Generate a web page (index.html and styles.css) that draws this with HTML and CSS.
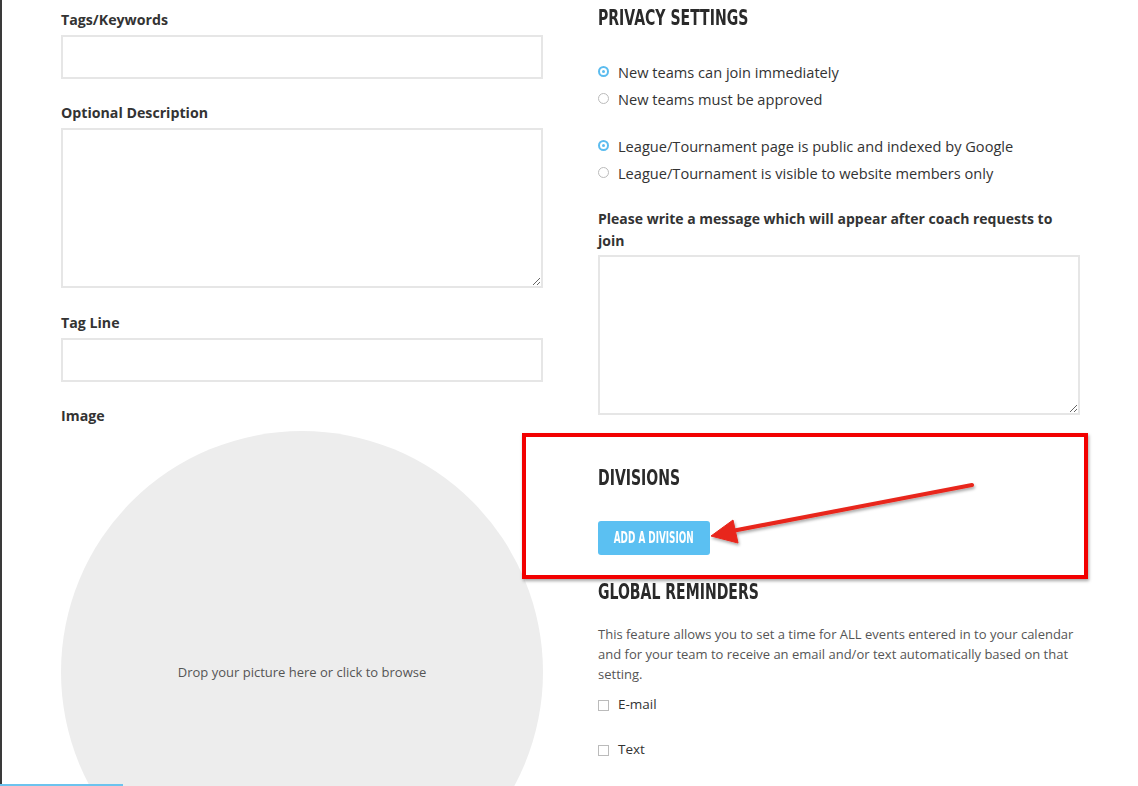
FILE: index.html
```html
<!DOCTYPE html>
<html lang="en">
  <head>
    <meta charset="UTF-8" />
    <meta name="viewport" content="width=device-width, initial-scale=1.0" />
    <title>League settings</title>
    <link rel="stylesheet" href="styles.css">
  </head>
  <body>
    <div id="page">
      <div class="column left">
        <label class="field-label">Tags/Keywords</label>
        <input type="text" class="text-input" />
        <label class="field-label">Optional Description</label>
        <textarea class="text-area"></textarea>
        <label class="field-label">Tag Line</label>
        <input type="text" class="text-input" />
        <label class="field-label">Image</label>
        <div class="drop-zone">
          <span>Drop your picture here or click to browse</span>
        </div>
      </div>

      <div class="column">
        <h2 class="section-title"><span>Privacy Settings</span></h2>
        <div class="radio-group">
          <div class="radio-row"><span class="radio checked"></span>New teams can join immediately</div>
          <div class="radio-row"><span class="radio"></span>New teams must be approved</div>
        </div>
        <div class="radio-group second">
          <div class="radio-row"><span class="radio checked"></span>League/Tournament page is public and indexed by Google</div>
          <div class="radio-row"><span class="radio"></span>League/Tournament is visible to website members only</div>
        </div>
        <label class="field-label wide">Please write a message which will appear after coach requests to join</label>
        <textarea class="text-area"></textarea>

        <h2 class="section-title divisions"><span>Divisions</span></h2>
        <button class="add-btn"><span>Add a Division</span></button>

        <h2 class="section-title reminders"><span>Global Reminders</span></h2>
        <p class="note">This feature allows you to set a time for ALL events entered in to your calendar and for your team to receive an email and/or text automatically based on that setting.</p>
        <div class="check-row"><span class="check"></span>E-mail</div>
        <div class="check-row"><span class="check"></span>Text</div>
      </div>

      <!-- annotation -->
      <div class="callout"></div>
      <svg class="arrow" width="1138" height="786" viewBox="0 0 1138 786">
        <defs>
          <filter id="shade" x="-10%" y="-50%" width="120%" height="200%">
            <feDropShadow dx="1" dy="2" stdDeviation="1.5" flood-color="#000" flood-opacity="0.35" />
          </filter>
        </defs>
        <g filter="url(#shade)" fill="#e8261b" stroke="#e8261b">
          <line x1="972" y1="485" x2="732" y2="531" stroke-width="4" stroke-linecap="round" />
          <polygon points="711,536 733,520 738,543" stroke-width="1" stroke-linejoin="round" />
        </g>
      </svg>
    </div>
    <div class="progress"></div>
  </body>
</html>
```

FILE: styles.css
```css
html, body {
  margin: 0;
  background: #fff;
}
body {
  font-family: "Open Sans", "Noto Sans", sans-serif;
  color: #333;
  overflow: hidden;
}
#page {
  position: relative;
  height: 786px;
  overflow: hidden;
  border-left: 2px solid #3a3a3a;
  box-sizing: border-box;
  padding-left: 59px;
  display: flex;
  gap: 55px;
}
.column {
  width: 482px;
  display: flex;
  flex-direction: column;
}
.column > * {
  flex-shrink: 0;
}
.column.left {
  padding-top: 9px;
}
.field-label {
  display: block;
  font-size: 14.2px;
  font-weight: bold;
  line-height: 22px;
  color: #333;
  margin: 0 0 4px 0;
}
.field-label.wide {
  font-size: 14px;
  margin-bottom: 3px;
}
.text-input {
  height: 44px;
  margin: 0 0 23px 0;
  border: 2px solid #e6e6e6;
  box-sizing: border-box;
  border-radius: 0;
  outline: none;
}
.text-area {
  height: 160px;
  margin: 0 0 24px 0;
  border: 2px solid #e6e6e6;
  box-sizing: border-box;
  border-radius: 0;
  resize: vertical;
  outline: none;
}
.drop-zone {
  width: 482px;
  height: 482px;
  border-radius: 50%;
  background-color: #ededed;
  display: flex;
  align-items: center;
  justify-content: center;
  font-size: 13px;
  color: #555;
}
.section-title {
  margin: 4px 0 0 0;
  font-family: "DejaVu Sans", sans-serif;
  font-stretch: condensed;
  font-size: 22px;
  line-height: 28px;
  font-weight: bold;
  text-transform: uppercase;
  color: #2a2a2a;
  white-space: nowrap;
}
.section-title span {
  display: inline-block;
  transform: scaleX(0.71);
  transform-origin: left center;
}
.radio-group {
  margin-top: 26px;
}
.radio-group.second {
  margin-top: 20px;
  margin-bottom: 22px;
}
.radio-row {
  display: flex;
  align-items: center;
  height: 27px;
  font-size: 14.6px;
  color: #333;
}
.radio {
  width: 11px;
  height: 11px;
  box-sizing: border-box;
  border: 1px solid #bbb;
  border-radius: 50%;
  margin-right: 9px;
  display: flex;
  align-items: center;
  justify-content: center;
}
.radio.checked {
  border: 2px solid #5bbcef;
}
.radio.checked::after {
  content: "";
  width: 3px;
  height: 3px;
  border-radius: 50%;
  background-color: #5bbcef;
}
.section-title.divisions {
  margin-top: 25px;
}
.add-btn {
  align-self: flex-start;
  margin-top: 29px;
  width: 112px;
  height: 34px;
  padding: 0;
  border: none;
  border-radius: 3px;
  background-color: #5bc0f2;
  color: #fff;
  font-family: "DejaVu Sans", sans-serif;
  font-weight: bold;
  font-size: 15px;
  text-transform: uppercase;
  white-space: nowrap;
  cursor: pointer;
  display: flex;
  align-items: center;
  justify-content: center;
}
.add-btn span {
  display: inline-block;
  transform: scaleX(0.59);
}
.section-title.reminders {
  margin-top: 23px;
}
.note {
  margin: 18px 0 8px 0;
  font-size: 13px;
  line-height: 20px;
  color: #555;
}
.check-row {
  display: flex;
  align-items: center;
  height: 24px;
  margin-bottom: 21px;
  font-size: 13.5px;
  color: #333;
}
.check {
  width: 11px;
  height: 11px;
  box-sizing: border-box;
  border: 1px solid #bbb;
  margin-right: 9px;
  margin-top: 3px;
}
.callout {
  position: absolute;
  left: 520px;
  top: 433px;
  width: 566px;
  height: 146px;
  box-sizing: border-box;
  border: 4px solid #f20000;
  box-shadow: 1px 2px 3px rgba(0, 0, 0, 0.35);
}
.arrow {
  position: absolute;
  left: -2px;
  top: 0;
  pointer-events: none;
}
.progress {
  position: fixed;
  left: 0;
  bottom: 0;
  width: 123px;
  height: 2px;
  background-color: #6cc3ee;
}
```
